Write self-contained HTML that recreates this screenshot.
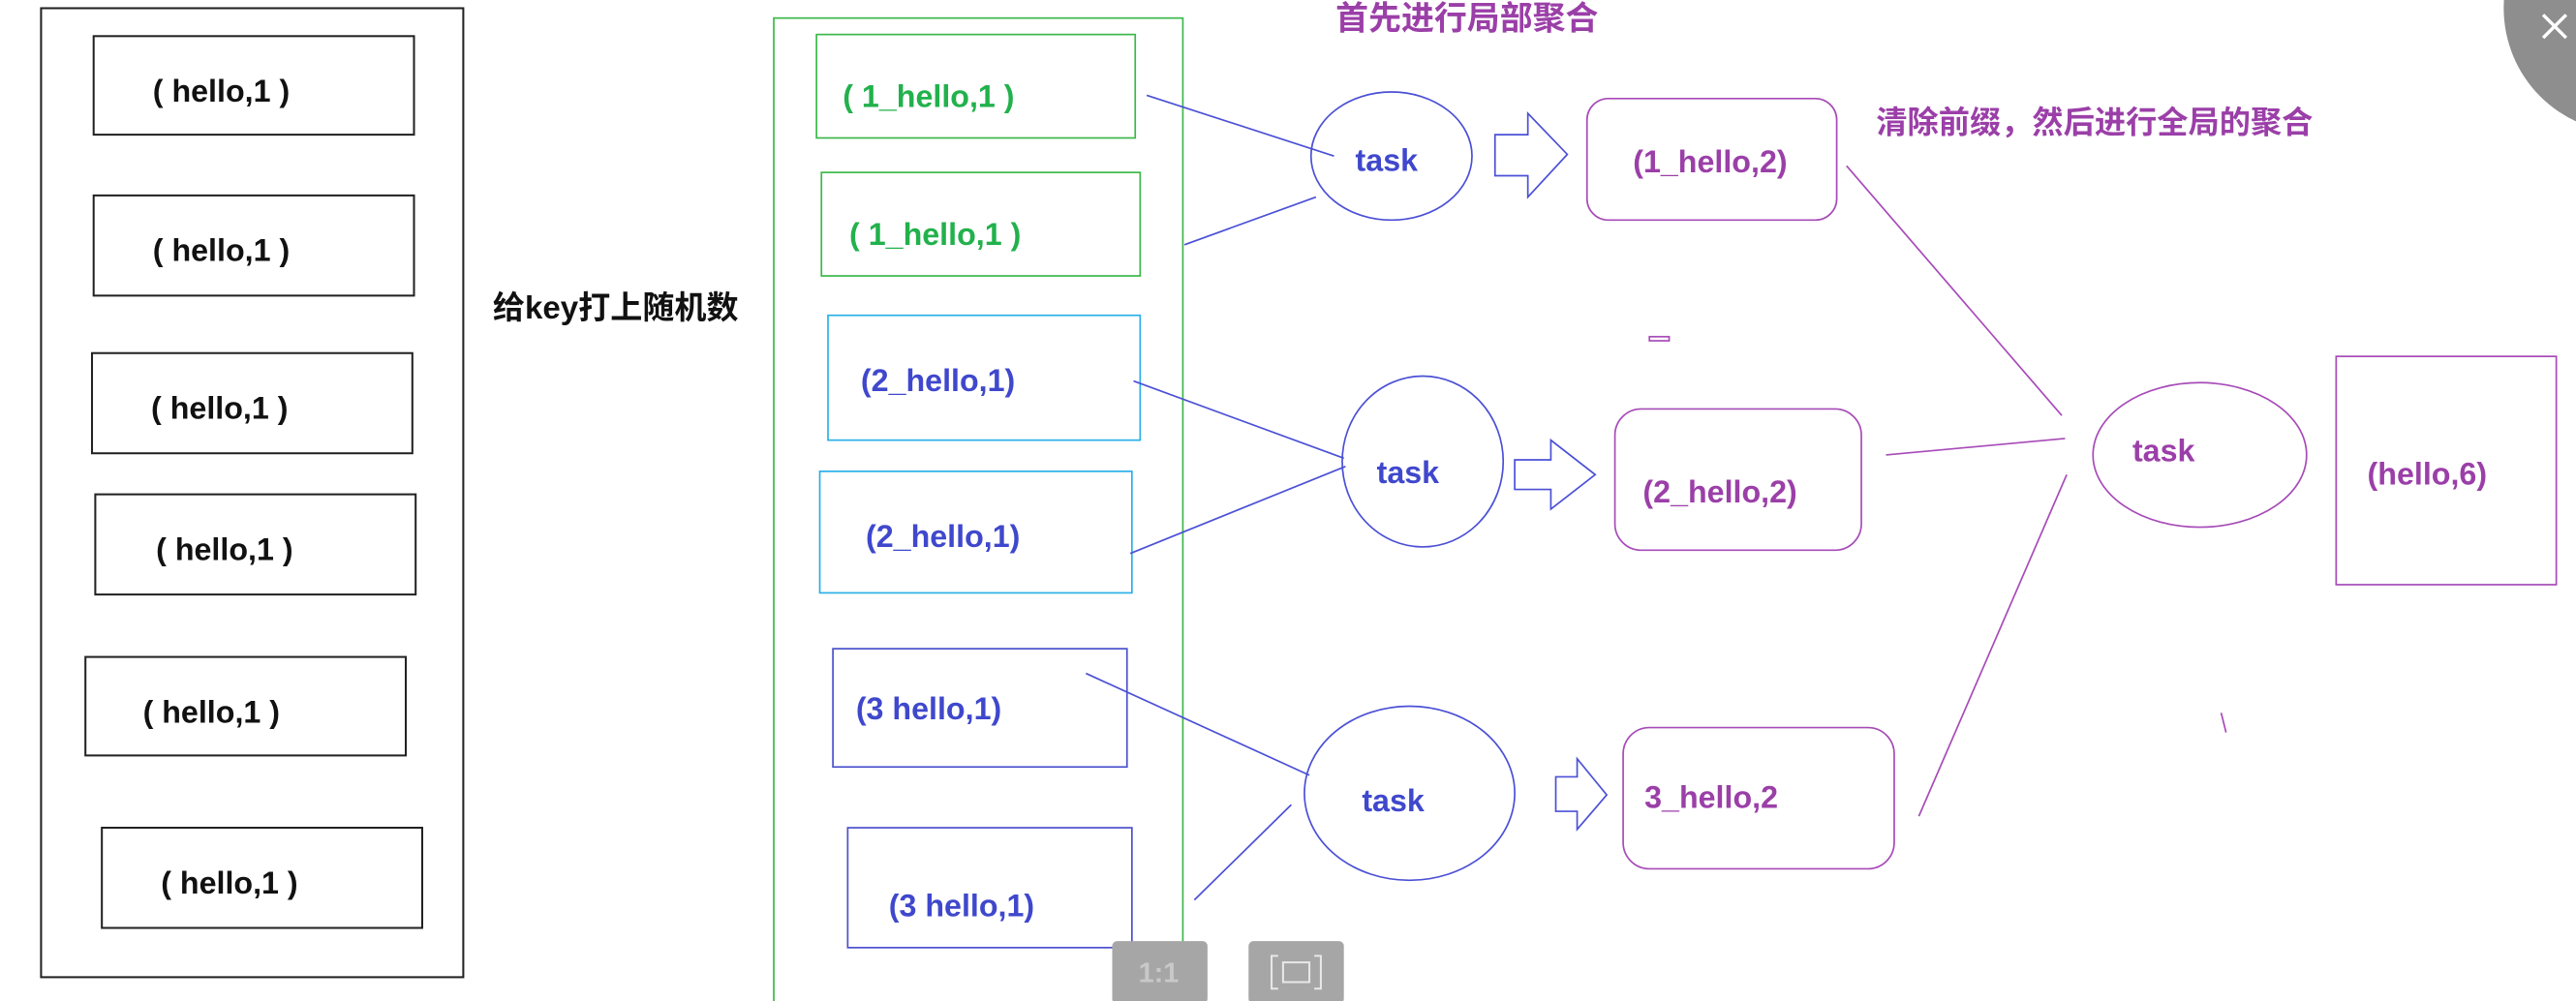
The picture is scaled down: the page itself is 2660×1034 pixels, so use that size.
<!DOCTYPE html>
<html><head><meta charset="utf-8"><style>
html,body{margin:0;padding:0;background:#fff;overflow:hidden}
svg{display:block}
text{font-family:"Liberation Sans","Noto Sans CJK SC",sans-serif;font-weight:bold}
</style></head><body>
<svg width="2660" height="1034" viewBox="0 0 1568 609.5" preserveAspectRatio="none" xmlns="http://www.w3.org/2000/svg">
<rect width="1568" height="610" fill="#fff"/>
<g fill="none" stroke="#222" stroke-width="1.2">
<rect x="25" y="5" width="257" height="590"/>
<rect x="57" y="22" width="195" height="60"/>
<rect x="57" y="119" width="195" height="61"/>
<rect x="56" y="215" width="195" height="61"/>
<rect x="58" y="301" width="195" height="61"/>
<rect x="52" y="400" width="195" height="60"/>
<rect x="62" y="504" width="195" height="61"/>
</g>
<g font-size="19" fill="#111">
<text x="93" y="62">( hello,1 )</text>
<text x="93" y="159">( hello,1 )</text>
<text x="92" y="255">( hello,1 )</text>
<text x="95" y="341">( hello,1 )</text>
<text x="87" y="440">( hello,1 )</text>
<text x="98" y="544">( hello,1 )</text>
<text x="300" y="194" font-size="19.5">给key打上随机数</text>
</g>
<rect x="471" y="11" width="249" height="610" fill="none" stroke="#3cb84a" stroke-width="1"/>
<g fill="none" stroke-width="1">
<rect x="497" y="21" width="194" height="63" stroke="#3cb84a"/>
<rect x="500" y="105" width="194" height="63" stroke="#3cb84a"/>
<rect x="504" y="192" width="190" height="76" stroke="#2ab0e8"/>
<rect x="499" y="287" width="190" height="74" stroke="#2ab0e8"/>
<rect x="507" y="395" width="179" height="72" stroke="#4b50cc"/>
<rect x="516" y="504" width="173" height="73" stroke="#4b50cc"/>
</g>
<g font-size="19">
<text x="513" y="65" fill="#22b14c">( 1_hello,1 )</text>
<text x="517" y="149" fill="#22b14c">( 1_hello,1 )</text>
<text x="524" y="238" fill="#3f48cc">(2_hello,1)</text>
<text x="527" y="333" fill="#3f48cc">(2_hello,1)</text>
<text x="521" y="438" fill="#3f48cc">(3  hello,1)</text>
<text x="541" y="558" fill="#3f48cc">(3  hello,1)</text>
</g>
<g stroke="#4b50d6" stroke-width="1" fill="none">
<line x1="698" y1="58" x2="812" y2="95"/>
<line x1="721" y1="149" x2="801" y2="120"/>
<line x1="690" y1="232" x2="818" y2="279"/>
<line x1="688" y1="337" x2="819" y2="284"/>
<line x1="661" y1="410" x2="797" y2="472"/>
<line x1="727" y1="548" x2="786" y2="490"/>
<ellipse cx="847" cy="95" rx="49" ry="39"/>
<ellipse cx="866" cy="281" rx="49" ry="52"/>
<ellipse cx="858" cy="483" rx="64" ry="53"/>
<path d="M910 82 H930 V69 L954 94 L930 120 V107 H910 Z"/>
<path d="M922 280 H944 V268 L971 289 L944 310 V298 H922 Z"/>
<path d="M947 473 H960 V462 L978 484 L960 505 V494 H947 Z"/>
</g>
<g font-size="19" fill="#3f48cc">
<text x="825" y="104">task</text>
<text x="838" y="294">task</text>
<text x="829" y="494">task</text>
</g>
<g stroke="#a74bb8" stroke-width="1" fill="none">
<rect x="966" y="60" width="152" height="74" rx="13"/>
<rect x="983" y="249" width="150" height="86" rx="16"/>
<rect x="988" y="443" width="165" height="86" rx="16"/>
<line x1="1124" y1="101" x2="1255" y2="253"/>
<line x1="1148" y1="277" x2="1257" y2="267"/>
<line x1="1258" y1="289" x2="1168" y2="497"/>
<line x1="1352" y1="434" x2="1355" y2="446"/>
<rect x="1004" y="205" width="12" height="2.5"/>
<ellipse cx="1339" cy="277" rx="65" ry="44"/>
<rect x="1422" y="217" width="134" height="139"/>
</g>
<g font-size="19" fill="#9b3fa8">
<text x="994" y="105">(1_hello,2)</text>
<text x="1000" y="306">(2_hello,2)</text>
<text x="1001" y="492">3_hello,2</text>
<text x="1298" y="281">task</text>
<text x="1441" y="295">(hello,6)</text>
<text x="813" y="18" font-size="20">首先进行局部聚合</text>
<text x="1142" y="81" font-size="19">清除前缀，然后进行全局的聚合</text>
</g>
<circle cx="1600" cy="5" r="76" fill="#8e8e8e"/>
<path d="M1548 9 L1562 23 M1562 9 L1548 23" stroke="#fff" stroke-width="2"/>
<rect x="677" y="573" width="58" height="38" rx="3" fill="#a6a6a6"/>
<text x="693" y="598" font-size="17" fill="#c8c8c8" font-weight="normal">1:1</text>
<rect x="760" y="573" width="58" height="38" rx="3" fill="#a6a6a6"/>
<path d="M778 582 h-4 v20 h4 M800 582 h4 v20 h-4 M781 586 h16 v12 h-16 Z" stroke="#e8e8e8" stroke-width="1.2" fill="none"/>
</svg>
</body></html>
